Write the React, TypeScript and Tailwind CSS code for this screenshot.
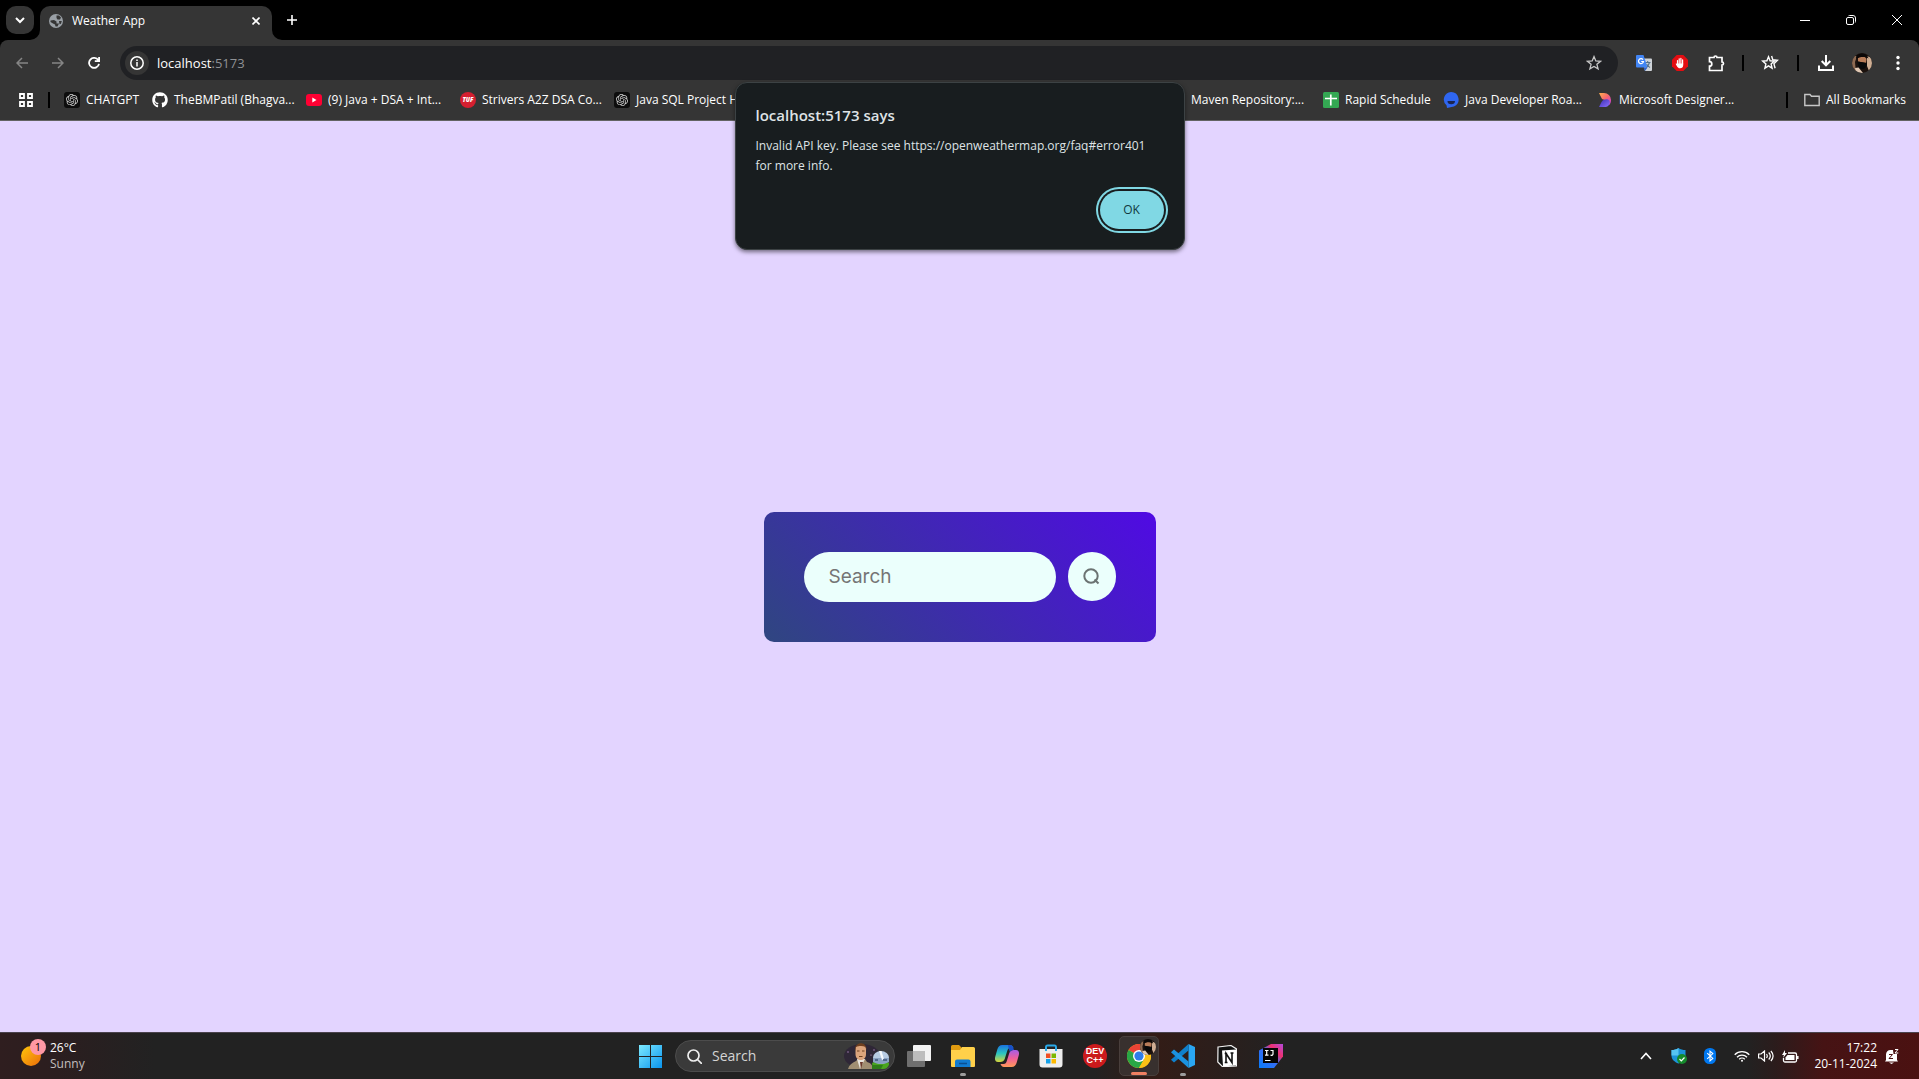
import type { ReactNode } from "react";
import { FaGithub } from "react-icons/fa";
import { SiOpenai } from "react-icons/si";

function Avatar({ className }: { className: string }) {
  return (
    <svg viewBox="0 0 20 20" className={className} aria-hidden="true">
      <defs>
        <clipPath id="avatar-clip">
          <circle cx="10" cy="10" r="10" />
        </clipPath>
      </defs>
      <g clipPath="url(#avatar-clip)">
        <rect width="20" height="20" fill="#1c120e" />
        <path d="M0 3h5l-2 6 1 11H0z" fill="#8d6a52" />
        <path d="M15 3l5 2v11l-3 2-2-5z" fill="#cfae93" />
        <path d="M6 5c2-2.500 7-2.500 8.500 1L14 10 6 8.500z" fill="#b87c58" />
        <path d="M4 4c2-5 11-5 12.500 1.500-3.500-2-8.500-2-12 .5z" fill="#0c0807" />
        <path d="M5.500 8.500l9.500 1.500c0 3.500-2 6-4.500 6s-5-2.500-5-7.500z" fill="#08090a" />
        <path d="M3 15l3.500-.5L11 20H4z" fill="#e0c8b4" />
      </g>
    </svg>
  );
}

function IconButton({ label, children }: { label: string; children: ReactNode }) {
  return (
    <button type="button" aria-label={label} className="flex h-9 w-9 shrink-0 items-center justify-center rounded-full">
      {children}
    </button>
  );
}

function TitleBar() {
  return (
    <header className="flex h-10 shrink-0 bg-black text-white">
      <button
        type="button"
        aria-label="Search tabs"
        className="mt-1.5 ml-1.5 flex h-7 w-7 items-center justify-center rounded-[10px] bg-[#353535]"
      >
        <svg viewBox="0 0 10 10" className="h-2.5 w-2.5" fill="none" stroke="white" strokeWidth="2">
          <path d="M1 3l4 4 4-4" />
        </svg>
      </button>
      <div className="relative mt-1.5 ml-1.5 flex w-58 items-center rounded-t-[10px] bg-[#353535] pr-2 pb-1 pl-2">
        <svg viewBox="0 0 10 10" className="absolute bottom-0 -left-2.5 h-2.5 w-2.5">
          <path d="M10 0v10H0A10 10 0 0 0 10 0z" fill="#353535" />
        </svg>
        <svg viewBox="0 0 10 10" className="absolute -right-2.5 bottom-0 h-2.5 w-2.5">
          <path d="M0 0v10h10A10 10 0 0 1 0 0z" fill="#353535" />
        </svg>
        <svg viewBox="0 0 16 16" className="h-4 w-4">
          <circle cx="8" cy="8" r="7" fill="#9aa0a6" />
          <path d="M8.500 2.500h2.500l2 2L12 6.500H9.500L8.500 5zM2.500 7.500L6 7l2.500 1.500v2H11l-1.500 3H7.500L7 11.500 5 10.500 2.500 9z" fill="#353535" />
          <path d="M11 8h2.800l-.8 2.800-1.500.5z" fill="#353535" />
        </svg>
        <span className="ml-2 text-xs">Weather App</span>
        <button type="button" aria-label="Close tab" className="ml-auto flex h-4 w-4 items-center justify-center">
          <svg viewBox="0 0 8 8" className="h-2 w-2" stroke="white" strokeWidth="1.600">
            <path d="M.5.5l7 7m0-7l-7 7" />
          </svg>
        </button>
      </div>
      <button type="button" aria-label="New tab" className="ml-2 flex w-6 items-center justify-center">
        <svg viewBox="0 0 10 10" className="h-2.5 w-2.5" stroke="white" strokeWidth="1.600">
          <path d="M5 0v10M0 5h10" />
        </svg>
      </button>
      <div className="-mr-px ml-auto flex">
        <button type="button" aria-label="Minimize" className="flex w-[46px] items-center justify-center">
          <svg viewBox="0 0 10 10" className="h-2.5 w-2.5" stroke="white">
            <path d="M0 5.500h10" />
          </svg>
        </button>
        <button type="button" aria-label="Restore" className="flex w-[46px] items-center justify-center">
          <svg viewBox="0 0 10 10" className="h-2.5 w-2.5" fill="none" stroke="white">
            <rect x=".5" y="2.500" width="7" height="7" rx="1.500" />
            <path d="M2.500.8C2.800.500 3 .500 3.500.500H7a2.500 2.500 0 0 1 2.500 2.500v3.500c0 .5 0 .7-.3 1" />
          </svg>
        </button>
        <button type="button" aria-label="Close" className="flex w-[46px] items-center justify-center">
          <svg viewBox="0 0 10 10" className="h-2.5 w-2.5" stroke="white">
            <path d="M0 0l10 10M10 0L0 10" />
          </svg>
        </button>
      </div>
    </header>
  );
}

function Toolbar() {
  return (
    <div className="flex h-[46px] items-center rounded-t-lg bg-[#353535] pr-[3px] pl-1 text-white">
      <IconButton label="Back">
        <svg viewBox="0 0 12 12" className="h-3 w-3" fill="none" stroke="#858585" strokeWidth="1.500">
          <path d="M12 6H1m5-5L1 6l5 5" />
        </svg>
      </IconButton>
      <IconButton label="Forward">
        <svg viewBox="0 0 12 12" className="h-3 w-3" fill="none" stroke="#858585" strokeWidth="1.500">
          <path d="M0 6h11M6 1l5 5-5 5" />
        </svg>
      </IconButton>
      <IconButton label="Reload">
        <svg viewBox="0 0 12 12" className="h-3 w-3" fill="none" stroke="white" strokeWidth="1.800">
          <path d="M10.300 3.200A5 5 0 1 0 11 6.800M11.100 0v4.200H6.800" />
        </svg>
      </IconButton>
      <div className="ml-2 flex h-[34px] flex-1 items-center rounded-full bg-[#202124] pr-2 pl-[5px]">
        <button type="button" aria-label="View site information" className="flex h-6 w-6 items-center justify-center rounded-full bg-[#353535]">
          <svg viewBox="0 0 14 14" className="h-3.5 w-3.5" fill="none" stroke="white" strokeWidth="1.500">
            <circle cx="7" cy="7" r="6.200" />
            <path d="M7 6v4.500M7 3.500V5" />
          </svg>
        </button>
        <span className="ml-2 text-[13px] leading-5">
          localhost<span className="text-[#8f9195]">:5173</span>
        </span>
        <button type="button" aria-label="Bookmark this tab" className="ml-auto flex h-8 w-8 items-center justify-center">
          <svg viewBox="0 0 16 16" className="h-4 w-4" fill="none" stroke="#c7c7c7" strokeWidth="1.300">
            <path d="M8 1.600l1.800 4.400 4.700.3-3.600 3 1.200 4.600L8 11.400l-4.100 2.500 1.200-4.600-3.600-3 4.700-.3z" />
          </svg>
        </button>
      </div>
      <div className="ml-2 flex items-center">
        <IconButton label="Google Translate">
          <svg viewBox="0 0 16 16" className="h-4 w-4">
            <path d="M6 3.500h9a1 1 0 0 1 1 1V15a1 1 0 0 1-1 1H9z" fill="#cfd3d8" />
            <path d="M9 7.500h5.500M11.700 6v1.500M13.500 7.500c-.5 2-2 4-3.500 5m.5-3.500c1 1.700 2 2.700 3.500 3.500" stroke="#55718a" fill="none" strokeWidth="1.100" />
            <path d="M1 0h6.500l4 12.500H1a1 1 0 0 1-1-1V1a1 1 0 0 1 1-1z" fill="#4285f4" />
            <path d="M7 4.600A2.500 2.500 0 1 0 7.500 6.500H5.200" stroke="white" fill="none" strokeWidth="1.200" />
            <path d="M7.500 12.500h4L9 16z" fill="#2f62c9" />
          </svg>
        </IconButton>
        <IconButton label="Content blocker">
          <svg viewBox="0 0 16 16" className="h-4 w-4">
            <path d="M4.700 0h6.600L16 4.700v6.600L11.300 16H4.700L0 11.300V4.700z" fill="#e40d12" />
            <path d="M5.500 5.500v4M7.200 3.800V9M8.900 3.300V9M10.600 4.800V9" stroke="white" strokeWidth="1.200" strokeLinecap="round" />
            <path d="M4.900 8.500h6.300v1.800c0 1.800-1.200 3-3.100 3-1.700 0-2.600-.9-3.600-2.800l-.9-1.700z" fill="white" />
          </svg>
        </IconButton>
        <IconButton label="Extensions">
          <svg viewBox="0 0 18 18" className="h-[18px] w-[18px]" fill="none" stroke="white" strokeWidth="1.700">
            <path d="M2.500 3.500H7a1.500 1.500 0 0 1 3 0h5V8a1.500 1.500 0 0 1 0 3v5.500H2.500v-4.300a2.300 2.300 0 0 0 0-4.600z" />
          </svg>
        </IconButton>
        <div className="mx-2 h-4 w-0.5 bg-black" />
        <IconButton label="Bookmarks">
          <svg viewBox="0 0 18 16" className="h-4 w-[18px]" fill="none" stroke="white" strokeWidth="1.400">
            <path d="M7.500 1.800l1.600 4 4.200.3-3.200 2.800 1 4.300-3.600-2.300-3.600 2.300 1-4.300L1.700 6.100l4.200-.3z" />
            <path d="M10.600 1l1.200 3.800 4.600.5-3.500 3.400 1.200 4.500" />
          </svg>
        </IconButton>
        <div className="mx-[9px] h-4 w-0.5 bg-black" />
        <IconButton label="Downloads">
          <svg viewBox="0 0 16 16" className="h-4 w-4" fill="none" stroke="white" strokeWidth="2">
            <path d="M8 0v10M3.700 6L8 10.300 12.300 6M1 10.500V15h14v-4.500" />
          </svg>
        </IconButton>
        <IconButton label="Profile">
          <Avatar className="h-5 w-5" />
        </IconButton>
        <IconButton label="Menu">
          <svg viewBox="0 0 4 16" className="h-4 w-1" fill="white">
            <circle cx="2" cy="2.500" r="1.700" />
            <circle cx="2" cy="8" r="1.700" />
            <circle cx="2" cy="13.500" r="1.700" />
          </svg>
        </IconButton>
      </div>
    </div>
  );
}

function OpenAiTile() {
  return (
    <span className="flex h-4 w-4 items-center justify-center rounded-[3px] bg-[#0d0d0d] text-[#d0d0d0]">
      <SiOpenai size={12} />
    </span>
  );
}

function Bookmark({ icon, label, width }: { icon: ReactNode; label: string; width: string }) {
  return (
    <a href="#" className={`flex shrink-0 items-center gap-1.5 whitespace-nowrap ${width}`}>
      <span className="flex h-4 w-4 shrink-0 items-center justify-center">{icon}</span>
      {label}
    </a>
  );
}

function BookmarksBar() {
  return (
    <nav
      aria-label="Bookmarks"
      className="flex h-[35px] items-center overflow-hidden border-b border-[#636363] bg-[#353535] pr-[13px] pb-1.5 pl-[19px] text-xs text-white"
    >
      <svg viewBox="0 0 14 14" className="h-3.5 w-3.5 shrink-0" fill="none" stroke="white" strokeWidth="1.800">
        <path d="M1 1h4v4H1zM9 1h4v4H9zM1 9h4v4H1zM9 9h4v4H9z" />
      </svg>
      <div className="mr-3.5 ml-[15px] h-4 w-0.5 shrink-0 bg-black" />
      <Bookmark width="w-22" label="CHATGPT" icon={<OpenAiTile />} />
      <Bookmark width="w-[154px]" label="TheBMPatil (Bhagva..." icon={<FaGithub size={16} />} />
      <Bookmark
        width="w-[154px]"
        label="(9) Java + DSA + Int..."
        icon={
          <svg viewBox="0 0 16 16" className="h-4 w-4">
            <rect y="2" width="16" height="12" rx="3" fill="#ff0033" />
            <path d="M6.300 5.500L10.500 8l-4.200 2.500z" fill="white" />
          </svg>
        }
      />
      <Bookmark
        width="w-[154px]"
        label="Strivers A2Z DSA Co..."
        icon={
          <span className="flex h-4 w-4 items-center justify-center rounded-full bg-[#d41f30] text-[6px] font-extrabold italic">
            TUF
          </span>
        }
      />
      <Bookmark width="w-[154px]" label="Java SQL Project H" icon={<OpenAiTile />} />
      <div className="w-[401px] shrink-0" />
      <Bookmark width="w-[154px]" label="Maven Repository:..." icon={null} />
      <Bookmark
        width="w-30"
        label="Rapid Schedule"
        icon={
          <svg viewBox="0 0 16 16" className="h-4 w-4">
            <rect width="16" height="16" rx="1.500" fill="#34a853" />
            <path d="M2 6.500h12M7.800 2.500v11" stroke="white" strokeWidth="1.700" />
          </svg>
        }
      />
      <Bookmark
        width="w-[154px]"
        label="Java Developer Roa..."
        icon={
          <svg viewBox="0 0 16 16" className="h-4 w-4">
            <path d="M8 0a7.500 7.500 0 0 1 3 14.400L4 16l-.5-2.800A7.500 7.500 0 0 1 8 0z" fill="#2f66f0" />
            <path d="M4.500 9h7.500a3.700 3.200 0 0 1-7.500 0z" fill="#1b2550" />
          </svg>
        }
      />
      <Bookmark
        width="w-[154px]"
        label="Microsoft Designer..."
        icon={
          <svg viewBox="0 0 16 16" className="h-4 w-4">
            <defs>
              <linearGradient id="designer-top" x1="0" y1="0" x2="1" y2="1">
                <stop offset="0" stopColor="#ffb04d" />
                <stop offset=".5" stopColor="#f9656f" />
                <stop offset="1" stopColor="#c23ce0" />
              </linearGradient>
              <linearGradient id="designer-bottom" x1="0" y1="0" x2="1" y2="1">
                <stop offset="0" stopColor="#3a2cb0" />
                <stop offset="1" stopColor="#8a70ff" />
              </linearGradient>
            </defs>
            <path d="M2 1h5a7 7 0 0 1 7 7c0 2-.6 3.500-1.500 5L9 8.500 5 7z" fill="url(#designer-top)" />
            <path d="M2 15l2.500-5c1.500-2.500 4-3 6.500-2.500 2.500 1 2 4 .5 6-1 1.200-2.500 1.500-4.500 1.500z" fill="url(#designer-bottom)" />
          </svg>
        }
      />
      <div className="ml-auto h-4 w-0.5 shrink-0 bg-black" />
      <a href="#" className="ml-4 flex shrink-0 items-center gap-1.5 whitespace-nowrap">
        <svg viewBox="0 0 16 14" className="h-3.5 w-4" fill="none" stroke="#c7c7c7" strokeWidth="1.400">
          <path d="M.8 1.500H6l1.500 1.800h7.700v9.200H.8z" />
        </svg>
        All Bookmarks
      </a>
    </nav>
  );
}

function AlertDialog() {
  return (
    <div
      role="alertdialog"
      aria-labelledby="alert-title"
      aria-describedby="alert-message"
      className="absolute top-[82px] left-1/2 flex w-[450px] -translate-x-1/2 flex-col rounded-xl border border-[#3c4244] bg-[#181d1f] px-4 pt-[22px] pb-4 pl-5 text-[#dfe3e5] shadow-[0_2px_4px_rgba(0,0,0,0.5)]"
    >
      <h2 id="alert-title" className="text-[15px] leading-5 font-semibold">localhost:5173 says</h2>
      <p id="alert-message" className="mt-[11px] text-xs leading-5">
        Invalid API key. Please see https://openweathermap.org/faq#error401
        <br />
        for more info.
      </p>
      <button
        type="button"
        className="mt-[15px] mr-1 mb-1 h-[38px] w-16 self-end rounded-full bg-[#80d8e4] text-xs font-medium text-[#10383f] ring-2 ring-[#80d8e4] ring-offset-2 ring-offset-[#181d1f]"
      >
        OK
      </button>
    </div>
  );
}

function WeatherSearch() {
  return (
    <main className="flex flex-1 items-center justify-center bg-[#e3d4ff]">
      <form className="flex gap-3 rounded-[10px] bg-[linear-gradient(45deg,#2f4680,#500ae4)] p-10 font-['Inter',sans-serif]">
        <input
          type="text"
          aria-label="Search"
          placeholder="Search"
          className="h-[50px] w-63 rounded-full bg-[#ebfffc] pl-[25px] text-[19px] text-[#626262] outline-none placeholder:text-[#757575]"
        />
        <button type="button" aria-label="Search" className="flex h-[49px] w-12 items-center justify-center rounded-full bg-[#ebfffc]">
          <svg viewBox="0 0 17 17" className="h-[17px] w-[17px]" fill="none" stroke="#6b7372" strokeWidth="2">
            <circle cx="8" cy="8" r="6.700" />
            <path d="M11.500 11.500l4 4" />
          </svg>
        </button>
      </form>
    </main>
  );
}

function TaskApp({ label, children, indicator }: { label: string; children: ReactNode; indicator?: boolean }) {
  return (
    <button type="button" aria-label={label} className="relative flex h-10 w-11 items-center justify-center">
      {children}
      {indicator && <span className="absolute bottom-0 left-1/2 h-[3px] w-1.5 -translate-x-1/2 rounded-full bg-[#9d9d9d]" />}
    </button>
  );
}

function TaskbarIcons() {
  return (
    <div className="flex items-center pl-0.5">
      <TaskApp label="Start">
        <svg viewBox="0 0 23 23" className="h-[23px] w-[23px]">
          <defs>
            <linearGradient id="start-fill" x1="0" y1="0" x2="23" y2="23" gradientUnits="userSpaceOnUse">
              <stop offset="0" stopColor="#7deaff" />
              <stop offset="1" stopColor="#0a94ee" />
            </linearGradient>
          </defs>
          <path d="M0 0h11v11H0zM12 0h11v11H12zM0 12h11v11H0zM12 12h11v11H12z" fill="url(#start-fill)" />
        </svg>
      </TaskApp>
      <label className="mr-0.5 ml-[3px] flex h-8 w-55 items-center rounded-full border border-[#4c4c4c] bg-[#3a3a3a] pl-[11px]">
        <svg viewBox="0 0 15 15" className="h-[15px] w-[15px] shrink-0" fill="none" stroke="#eeeeee" strokeWidth="1.700">
          <circle cx="6.500" cy="6.500" r="5.500" />
          <path d="M10.500 10.500l4 4" strokeLinecap="round" />
        </svg>
        <input
          type="text"
          aria-label="Search Windows"
          placeholder="Search"
          className="ml-2.5 w-0 flex-1 bg-transparent text-sm outline-none placeholder:text-[#d4d4d4]"
        />
        <svg viewBox="0 0 46 26" className="mr-1 h-[26px] w-[46px] shrink-0">
          <ellipse cx="18" cy="13" rx="18" ry="12" fill="#2b2036" opacity=".7" />
          <circle cx="4" cy="9" r=".7" fill="#b58ac8" />
          <circle cx="30" cy="7" r=".7" fill="#b58ac8" />
          <circle cx="27" cy="12" r=".6" fill="#d9a6d9" />
          <path d="M4 26c1-4 4-6 8-8l2-2h7l2 3c4 1 6 4 6 7z" fill="#a08e72" />
          <path d="M13 16l3 10 5-10z" fill="#e9e4dc" />
          <path d="M16 19l1 7 2-7z" fill="#6b3a2c" />
          <path d="M11.500 6c0-6 10.500-6 10.500 0v5c0 8-10.500 8-10.500 0z" fill="#dca47c" />
          <path d="M11 8C10-2 23-2 22.500 7l-1-3c-3-1.500-7-1-9.500 0z" fill="#70401f" />
          <path d="M13 8h2.500m2.500 0h2.500m-5.500 5.500h3.500" stroke="#70401f" fill="none" />
          <path d="M28 20c5-3 13-3 17 0v2c-2 3-3 4-6 4H29z" fill="#4aa51e" />
          <path d="M28 22h11l-2 4H28z" fill="#2f7d18" />
          <ellipse cx="37" cy="14.500" rx="8" ry="6.500" fill="#b7cbe2" />
          <path d="M29 15h16v4c-4 2.500-12 2.500-16 0z" fill="#8aa2c2" />
          <path d="M35 8l3 9 2-.5L37.500 8z" fill="#f4f8fc" />
          <path d="M31 16h3v2h-3zm8 0h4v2h-4z" fill="#51688a" />
        </svg>
      </label>
      <TaskApp label="Task view">
        <svg viewBox="0 0 24 22" className="h-[22px] w-6">
          <rect x="6" width="18" height="16" rx="1" fill="#f2f2f2" />
          <rect y="6" width="18" height="16" rx="1" fill="#6f6f6f" />
          <rect x="6" y="6" width="12" height="10" fill="#bdbdbd" />
        </svg>
      </TaskApp>
      <TaskApp label="File Explorer" indicator>
        <svg viewBox="0 0 24 22" className="h-[22px] w-6">
          <path d="M0 1.500A1.500 1.500 0 0 1 1.500 0H8l2.500 2.500V6H0z" fill="#e09a10" />
          <path d="M0 5h9l2-3h11.500A1.500 1.500 0 0 1 24 3.500V21a1 1 0 0 1-1 1H1a1 1 0 0 1-1-1z" fill="#ffd04a" />
          <path d="M4 22v-5.500a2 2 0 0 1 2-2h11.500a2 2 0 0 1 2 2V22z" fill="#117bd0" />
          <path d="M8 18.500h8" stroke="#0b4f91" strokeWidth="1.500" />
        </svg>
      </TaskApp>
      <TaskApp label="Copilot">
        <svg viewBox="0 0 24 22" className="h-[22px] w-6">
          <defs>
            <linearGradient id="copilot-left" x1="0" y1="0" x2="0" y2="1">
              <stop offset="0" stopColor="#1a72e0" />
              <stop offset=".5" stopColor="#2bc5c0" />
              <stop offset="1" stopColor="#d7d63a" />
            </linearGradient>
            <linearGradient id="copilot-right" x1="0" y1="0" x2="0" y2="1">
              <stop offset="0" stopColor="#a65de8" />
              <stop offset=".5" stopColor="#f0609a" />
              <stop offset="1" stopColor="#ff9a57" />
            </linearGradient>
          </defs>
          <path d="M19 5h2c3 0 3.500 3 2.700 5.500l-2 7C21 20 19.500 22 16.500 22H9c-2 0-3-1.500-3.500-3h3c2 0 2.700-1 3.300-3l2.500-8C15 6 16.500 5 19 5z" fill="url(#copilot-right)" />
          <path d="M5 17H3C0 17-.5 14 .3 11.500l2-7C3 2 4.500 0 7.500 0H15c2 0 3 1.500 3.500 3h-3c-2 0-2.700 1-3.300 3l-2.500 8C9 16 7.500 17 5 17z" fill="url(#copilot-left)" />
          <path d="M13 0h2c2 0 3 1.500 4 5-2 0-3.500.500-4.200 2L13.500 3z" fill="#1950c8" />
        </svg>
      </TaskApp>
      <TaskApp label="Microsoft Store">
        <svg viewBox="0 0 24 24" className="h-6 w-6">
          <path d="M7 7V3a1.500 1.500 0 0 1 1.500-1.500h7A1.500 1.500 0 0 1 17 3v4" fill="none" stroke="#2aa9e8" strokeWidth="1.800" />
          <path d="M.5 5h23v15.500a3 3 0 0 1-3 3h-17a3 3 0 0 1-3-3z" fill="#ededed" />
          <path d="M6 2.500h2V7H6zM16 2.500h2V7h-2z" fill="#2aa9e8" />
          <path d="M7 9.500h4.500V14H7z" fill="#f04f24" />
          <path d="M12.500 9.500H17V14h-4.500z" fill="#7cb700" />
          <path d="M7 15h4.500v4.500H7z" fill="#14a0e8" />
          <path d="M12.500 15H17v4.500h-4.500z" fill="#fdb900" />
        </svg>
      </TaskApp>
      <TaskApp label="Dev-C++">
        <span className="flex h-6 w-6 flex-col items-center justify-center rounded-full bg-[#cb1a1c] font-['Liberation_Sans',sans-serif] text-[9px] leading-[9px] font-bold text-white">
          <span>DEV</span>
          <span>C++</span>
        </span>
      </TaskApp>
      <button
        type="button"
        aria-label="Google Chrome"
        className="relative mx-0.5 flex h-10 w-10 items-center justify-center rounded-[5px] border border-[#493f3c] bg-[#38302e]"
      >
        <svg viewBox="0 0 24 24" className="h-6 w-6">
          <circle cx="12" cy="12" r="12" fill="#fbc116" />
          <path d="M12 12L1.600 6A12 12 0 0 1 22.400 6H12z" fill="#ea4335" />
          <path d="M12 12L1.600 6a12 12 0 0 0 10.400 18l5.200-9z" fill="#28a745" />
          <path d="M12 6h10.400A12 12 0 0 1 12 24l5.200-9z" fill="#fbc116" />
          <circle cx="12" cy="12" r="6" fill="white" />
          <circle cx="12" cy="12" r="4.600" fill="#2f7de9" />
        </svg>
        <Avatar className="absolute top-0.5 right-0.5 h-4 w-4" />
        <span className="absolute bottom-0 left-1/2 h-[3px] w-4 -translate-x-1/2 rounded-full bg-[#f08062]" />
      </button>
      <TaskApp label="Visual Studio Code" indicator>
        <svg viewBox="0 0 24 24" className="h-6 w-6">
          <path d="M17.500 0L24 3v18l-6.500 3z" fill="#2aa6f2" />
          <path d="M17.500 0v6.500L3 18.500l-3-2.700z" fill="#0f80cc" />
          <path d="M17.500 24v-6.500L3 5.500 0 8.200z" fill="#1b92e0" />
        </svg>
      </TaskApp>
      <TaskApp label="Notion">
        <svg viewBox="0 0 20 22" className="h-[22px] w-5">
          <path d="M1 2l13-1.500L19.500 4v17l-14 .7L.8 17z" fill="#111111" stroke="#f1f1f1" strokeWidth="1.200" />
          <path d="M5 5.500l14-1v16l-13 .8z" fill="white" />
          <path d="M9 17.500V8.500l6 9V8M7.700 8.500h2.500M7.700 17.500h2.800M13.500 8H16.500" fill="none" stroke="#111111" strokeWidth="1.600" />
        </svg>
      </TaskApp>
      <TaskApp label="IntelliJ IDEA">
        <svg viewBox="0 0 24 24" className="h-6 w-6">
          <defs>
            <linearGradient id="idea-fill" x1="0" y1="1" x2="1" y2="0">
              <stop offset="0" stopColor="#087cfa" />
              <stop offset=".5" stopColor="#3b6cf5" />
              <stop offset=".7" stopColor="#f0306d" />
              <stop offset="1" stopColor="#b04ae0" />
            </linearGradient>
          </defs>
          <path d="M0 6.500L12 0h12v12.500L15 24H0z" fill="url(#idea-fill)" />
          <rect x="4" y="4" width="15" height="15" fill="#050505" />
          <path d="M6 6.500h3.500M7.700 6.500v4.700M6 11.200h3.500M11.500 6.500H14v3.500c0 1-1 1.500-2.500 1.200M6 16.500h5.500" fill="none" stroke="white" strokeWidth="1.200" />
        </svg>
      </TaskApp>
    </div>
  );
}

function SystemTray() {
  return (
    <div className="flex items-center justify-end pr-5">
      <svg viewBox="0 0 12 8" className="h-2 w-3" fill="none" stroke="white" strokeWidth="1.600">
        <path d="M1 7l5-5.500L11 7" />
      </svg>
      <svg viewBox="0 0 16 16" className="ml-[19px] h-4 w-4">
        <path d="M7.500 0c2 1.500 4.500 2 7 2v5.500c0 4-3 6.500-7 8-4-1.500-7-4-7-8V2c2.500 0 5-.5 7-2z" fill="#1c93d8" />
        <path d="M.5 2c2.500 0 5-.5 7-2v7.500h-7z" fill="#56c4f2" />
        <circle cx="11" cy="11" r="5" fill="#158a2c" />
        <path d="M8.500 11l1.800 1.800L13.500 9.500" fill="none" stroke="white" strokeWidth="1.200" />
      </svg>
      <svg viewBox="0 0 12 16" className="ml-[17px] h-4 w-3">
        <rect width="12" height="16" rx="5.500" fill="#0078f0" />
        <path d="M3.200 5.200l5.600 5.200L6 12.800V3.200l2.800 2.400-5.600 5.200" fill="none" stroke="white" strokeWidth="1.100" />
      </svg>
      <svg viewBox="0 0 16 12" className="ml-[18px] h-3 w-4" fill="none" stroke="white" strokeWidth="1.300">
        <path d="M.7 4.700a10.300 10.300 0 0 1 14.600 0M3 7.200a7 7 0 0 1 10 0M5.200 9.300a4 4 0 0 1 5.600 0" />
        <circle cx="8" cy="10.800" r="1" fill="white" stroke="none" />
      </svg>
      <svg viewBox="0 0 16 12" className="ml-2 h-3 w-4" fill="none" stroke="white" strokeWidth="1.200">
        <path d="M.6 4h2.400L6.500 1v10L3 8H.6zM8.500 4c1 1.300 1 2.700 0 4M10.700 2.500c2 2.200 2 4.800 0 7M12.900 1c2.800 3.200 2.800 6.800 0 10" />
      </svg>
      <svg viewBox="0 0 17 13" className="ml-2 h-[13px] w-[17px]" fill="none" stroke="white" strokeWidth="1.300">
        <path d="M6 3h7a1.500 1.500 0 0 1 1.500 1.500v6A1.500 1.500 0 0 1 13 12H3a1.500 1.500 0 0 1-1.500-1.500V8" />
        <path d="M5.500 5h7v5h-9V7.500z" fill="white" stroke="none" />
        <path d="M15.800 6v3" strokeWidth="1.500" />
        <path d="M3 0L0 5h2L1 8l4-5H3z" fill="white" stroke="none" />
      </svg>
      <div className="ml-3.5 w-16 text-right text-xs leading-4 whitespace-nowrap">
        <div>17:22</div>
        <div>20-11-2024</div>
      </div>
      <svg viewBox="0 0 14 15" className="ml-2 h-[15px] w-3.5">
        <path d="M1 11V5.500C1 3 3 1 5.500 1H8l.5 4H12v6l1 1.500H0z" fill="white" />
        <path d="M4 13.500h5L6.500 15z" fill="white" />
        <path d="M4 5.500h3.500L4 9.500h4" stroke="#4d1212" fill="none" />
        <path d="M10 .5h3L10 4h3.300" stroke="white" fill="none" />
      </svg>
    </div>
  );
}

function Taskbar() {
  return (
    <footer className="grid h-[47px] shrink-0 grid-cols-[1fr_auto_1fr] items-center border-t border-[#4a424c] bg-[linear-gradient(90deg,#2f1e1f_0%,#2b1e1f_3%,#222222_8%,#222222_57%,#331c16_60%,#2c1e1b_63%,#222222_67%,#222222_91%,#2b1c1c_92.500%,#461314_95%,#4b1111_100%)] text-white">
      <div className="flex items-center pl-5">
        <div className="relative h-8 w-[30px]">
          <span className="absolute top-1.5 left-px h-5 w-5 rounded-full bg-linear-135 from-[#fdc70a] to-[#ea6a0a]" />
          <span className="absolute -top-px left-2.5 flex h-4 w-4 items-center justify-center rounded-full bg-[#ff98a4] text-[11px] leading-4 text-black">1</span>
        </div>
        <div className="text-xs leading-4">
          <div>26°C</div>
          <div className="text-[#c3bebe]">Sunny</div>
        </div>
      </div>
      <TaskbarIcons />
      <SystemTray />
    </footer>
  );
}

export default function App() {
  return (
    <div className="relative flex h-screen flex-col overflow-hidden bg-black font-['Open_Sans','Noto_Sans',sans-serif]">
      <TitleBar />
      <Toolbar />
      <BookmarksBar />
      <WeatherSearch />
      <Taskbar />
      <AlertDialog />
    </div>
  );
}
